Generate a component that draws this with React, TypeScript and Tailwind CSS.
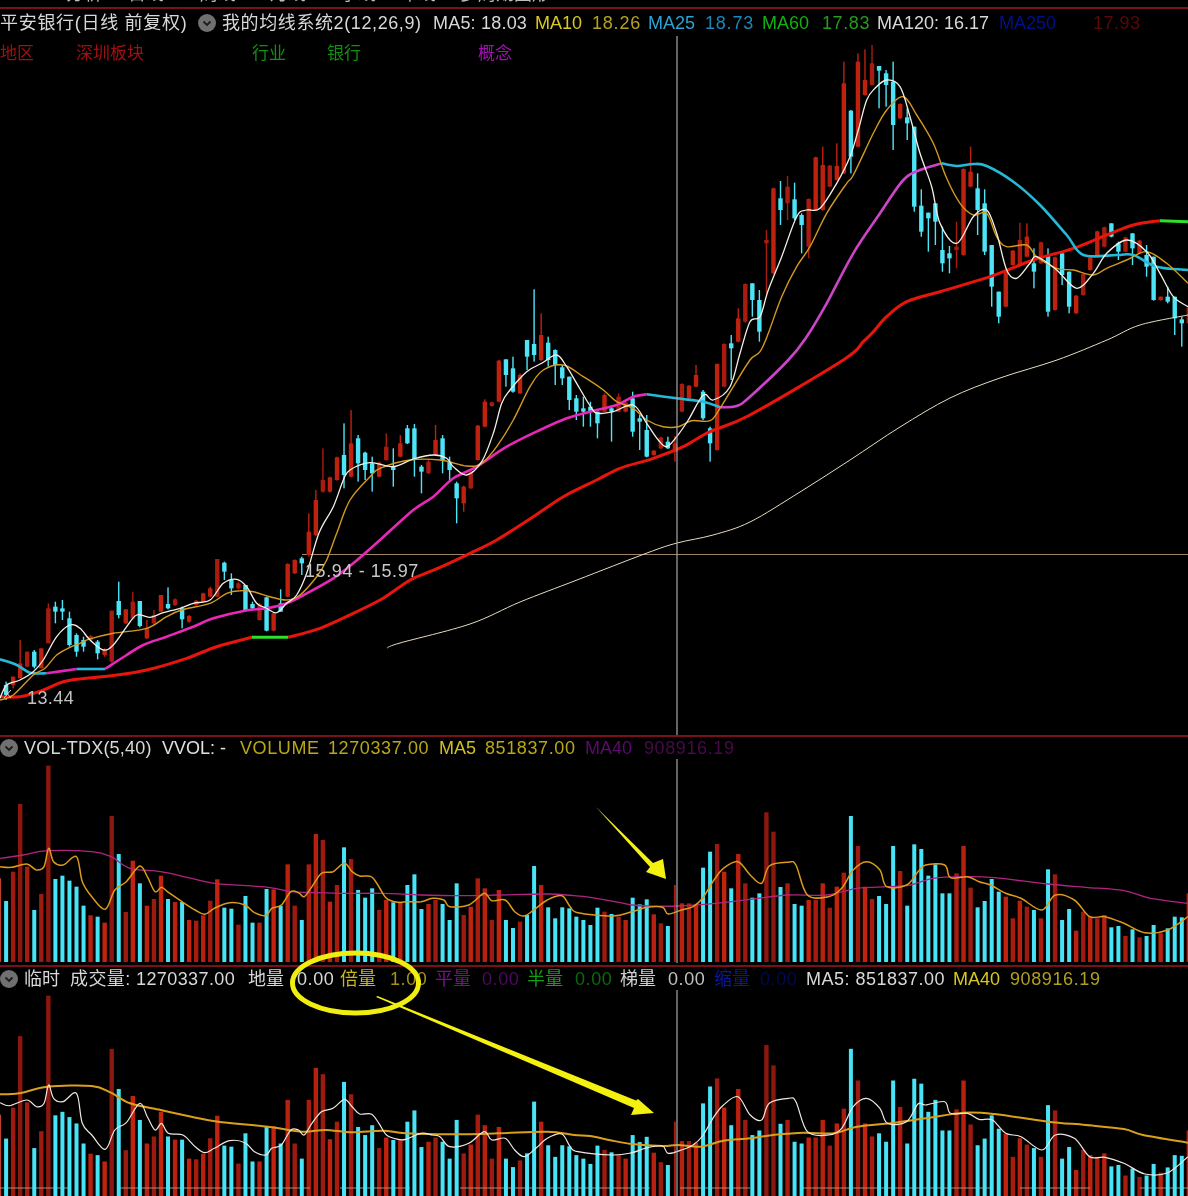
import React from "react";

type P = [number, number];
const fy = (o: number, s = 3) => (y: number) => o + y / s;

const pairs = (a: number[], ox: number, sx: number, oy: number, sy = 3): P[] => {
  const r: P[] = [];
  for (let i = 0; i < a.length; i += 2) r.push([ox + a[i] / sx, oy + a[i + 1] / sy]);
  return r;
};

const smooth = (p: P[]) => {
  let d = `M${p[0][0].toFixed(1)} ${p[0][1].toFixed(1)}`;
  for (let i = 0; i < p.length - 1; i++) {
    const a = p[Math.max(i - 1, 0)], b = p[i], c = p[i + 1], e = p[Math.min(i + 2, p.length - 1)];
    const c1: P = [b[0] + (c[0] - a[0]) / 6, b[1] + (c[1] - a[1]) / 6];
    const c2: P = [c[0] - (e[0] - b[0]) / 6, c[1] - (e[1] - b[1]) / 6];
    d += `C${c1[0].toFixed(1)} ${c1[1].toFixed(1)} ${c2[0].toFixed(1)} ${c2[1].toFixed(1)} ${c[0].toFixed(1)} ${c[1].toFixed(1)}`;
  }
  return d;
};

const bx = (i: number) => 6.1 + 7.04 * i;

const tops = [513, 425, 222, 410, 540, 492, 107, 447, 437, 452, 470, 527, 556, 560, 578, 258, 372, 546, 392, 460, 527, 507, 437, 507, 516, 516, 570, 572, 556, 512, 448, 533, 536, 584, 498, 578, 578, 477, 478, 527, 403, 527, 570, 403, 312, 330, 515, 465, 352, 387, 480, 503, 475, 540, 510, 517, 515, 465, 433, 537, 522, 510, 522, 570, 460, 555, 530, 445, 475, 570, 480, 570, 594, 575, 555, 408, 465, 532, 565, 532, 535, 560, 570, 585];
const vol: { c: string; y: number }[] = [];
const seq2: [string, number][] = [["c", 533], ["r", 545], ["c", 552], ["r", 560], ["r", 570], ["c", 503], ["c", 523], ["c", 508], ["r", 553], ["r", 580], ["c", 588], ["t", 465], ["r", 520], ["r", 520], ["r", 525], ["c", 413], ["c", 365], ["r", 342], ["r", 425], ["c", 475], ["r", 372], ["r", 460], ["c", 503], ["c", 490], ["d", 247], ["d", 305], ["c", 471], ["r", 460], ["c", 522], ["c", 527], ["r", 510], ["r", 510], ["r", 460], ["r", 533], ["r", 470], ["r", 428], ["c", 258], ["r", 348], ["r", 470], ["r", 507], ["c", 498], ["c", 522], ["c", 348], ["r", 423], ["c", 527], ["c", 343], ["c", 357], ["c", 437], ["c", 403], ["c", 490], ["c", 490], ["r", 430], ["r", 348], ["r", 473], ["c", 532], ["c", 513], ["c", 447], ["c", 485], ["r", 500], ["r", 565], ["r", 512], ["r", 530], ["c", 540], ["r", 565], ["c", 418], ["r", 433], ["c", 570], ["c", 537], ["r", 602], ["r", 545], ["r", 560], ["r", 565], ["r", 555], ["c", 592], ["c", 588], ["r", 618], ["c", 598], ["r", 622], ["c", 618], ["c", 585], ["r", 610], ["c", 595], ["c", 560], ["c", 562], ["r", 490]];

const cyanFirst = [0, 4, 7, 8, 9, 10, 11, 13, 16, 19, 23, 25, 31, 32, 34, 35, 37, 39, 42, 48, 50, 51, 52, 55, 57, 58, 59, 62, 63, 64, 71, 72, 74, 75, 77, 78, 79, 80, 81, 82, 83];
const colourAt = (i: number) => {
  if (i <= 83) return cyanFirst.includes(i) ? "c" : "r";
  return seq2[i - 84][0];
};

for (let i = 0; i < 84; i++) {
  let c = colourAt(i);
  if (i === 6 || i === 2 || i === 15) c = "d";
  vol.push({ c, y: 730 + tops[i] / 3 });
}
seq2.forEach(([c, y]) => vol.push({ c, y: 730 + y / 3 }));

const redShade = (i: number, c: string) => {
  if (c === "d") return "#8c170f";
  const s = ["#b8200f", "#a81c10", "#c2230f", "#9c1a0f"];
  return s[(i * 7) % 4];
};

const Bars = ({ map, base }: { map: (y: number) => number; base: number }) => (
  <>
    <rect x={-2} y={map(730 + 445 / 3)} width={3} height={base - map(730 + 445 / 3)} fill="#c04030" />
    {vol.map((b, i) =>
      b.c === "c" ? null : (
        <rect key={i} x={bx(i) - (b.c === "t" ? 1 : 2.2)} y={map(b.y)} width={b.c === "t" ? 2 : 4.4} height={base - map(b.y)} fill={redShade(i, b.c)} />
      ),
    )}
  </>
);
const CyanBars = ({ map, base }: { map: (y: number) => number; base: number }) => (
  <>
    {vol.map((b, i) =>
      b.c === "c" ? <rect key={i} x={bx(i) - 2} y={map(b.y)} width={4} height={base - map(b.y)} fill="#46e4f6" /> : null,
    )}
  </>
);

const A = [[425, 435, 465, 480], [410, 410, 435, 445], [300, 370, 415, 415], [335, 335, 380, 380], [330, 335, 380, 385], [325, 325, 385, 385], [190, 205, 310, 310], [185, 200, 215, 250], [180, 205, 215, 240], [215, 235, 315, 320], [280, 285, 335, 350], [290, 300, 320, 335], [285, 288, 300, 305], [300, 305, 340, 358], [325, 330, 345, 350], [212, 212, 365, 368], [125, 183, 225, 235], [208, 208, 250, 252], [155, 185, 235, 240], [183, 183, 258, 262], [240, 265, 295, 297], [210, 225, 250, 255], [165, 165, 215, 215], [142, 192, 205, 208], [175, 178, 195, 198], [200, 205, 238, 265], [225, 228, 245, 248], [180, 182, 195, 198], [158, 160, 185, 188], [140, 145, 170, 172], [57, 57, 170, 172], [65, 68, 95, 120], [100, 120, 145, 165], [125, 130, 145, 148], [135, 135, 212, 215], [185, 192, 205, 207], [190, 192, 240, 242], [170, 172, 272, 274], [218, 220, 272, 274], [148, 190, 215, 215], [70, 72, 170, 172], [58, 60, 100, 102], [50, 55, 70, 105]];
const B = [[700, 755, 825, 830], [630, 660, 765, 768], [505, 600, 635, 638], [590, 592, 635, 638], [530, 532, 600, 602], [430, 525, 585, 625], [390, 490, 590, 592], [465, 475, 550, 605], [515, 518, 570, 600], [530, 550, 580, 635], [545, 548, 590, 592], [460, 500, 540, 542], [505, 560, 570, 620], [465, 490, 530, 532], [435, 445, 490, 492], [432, 445, 540, 590], [555, 560, 575, 640], [540, 545, 580, 582], [435, 480, 525, 527], [465, 475, 540, 580], [530, 545, 570, 605], [605, 610, 655, 730], [617, 620, 670, 695], [570, 575, 625, 627], [435, 437, 540, 542], [358, 365, 440, 442], [365, 367, 378, 380], [240, 242, 365, 367], [238, 238, 285, 320], [230, 265, 335, 338], [280, 285, 340, 342], [180, 180, 230, 270], [28, 192, 225, 245], [100, 165, 240, 243], [170, 188, 240, 260], [208, 210, 255, 315], [255, 262, 295, 315], [290, 290, 360, 390], [345, 355, 395, 420], [350, 385, 395, 440], [365, 380, 395, 440], [395, 395, 430, 475], [340, 345, 395, 397], [375, 385, 395, 485], [340, 350, 395, 397], [365, 368, 395, 397], [335, 355, 455, 470], [405, 415, 425, 510], [405, 450, 530, 532], [510, 512, 525, 527], [470, 472, 505, 507], [470, 485, 505, 507], [468, 490, 515, 545], [310, 312, 395, 397], [315, 317, 355, 357], [255, 285, 320, 322], [330, 335, 415, 420], [440, 445, 490, 545], [250, 252, 510, 512], [190, 192, 320, 322], [165, 190, 205, 300], [85, 115, 185, 187]];
const C = [[730, 732, 845, 848], [730, 730, 780, 830], [750, 780, 875, 905], [570, 600, 610, 760], [443, 445, 700, 702], [423, 475, 510, 555], [408, 440, 490, 540], [428, 478, 535, 540], [520, 525, 555, 640], [475, 477, 620, 655], [350, 352, 510, 512], [320, 375, 510, 512], [375, 377, 440, 442], [310, 378, 420, 422], [65, 130, 400, 402], [210, 212, 350, 400], [40, 65, 320, 322], [28, 120, 165, 167], [15, 70, 135, 137], [78, 78, 92, 205], [90, 100, 135, 200], [65, 125, 255, 330], [190, 192, 235, 237], [205, 232, 250, 300], [260, 260, 500, 515], [448, 497, 575, 590], [518, 518, 535, 635], [490, 490, 545, 615], [560, 630, 670, 695], [618, 640, 655, 700], [545, 620, 630, 685], [385, 387, 645, 647], [320, 395, 440, 442], [400, 445, 510, 585], [448, 490, 635, 645], [615, 615, 740, 800], [755, 755, 830, 850], [690, 692, 800, 802], [630, 632, 675, 677], [548, 600, 675, 677], [550, 590, 650, 652], [625, 670, 695, 745], [605, 607, 670, 672], [625, 645, 815, 830], [650, 652, 810, 812], [640, 640, 705, 735], [695, 695, 800, 820], [765, 767, 820, 822], [700, 702, 765, 767], [650, 652, 690, 692], [572, 574, 650, 652], [560, 562, 620, 622], [550, 550, 590, 592], [605, 610, 635, 660], [590, 592, 635, 637], [580, 580, 625, 675], [600, 602, 640, 642], [615, 645, 680, 710], [650, 650, 780, 782], [770, 770, 780, 782], [740, 770, 785, 790], [770, 770, 835, 885], [830, 838, 850, 920], [800, 802, 850, 852]];

const candleSets: [number[][], number, number][] = [[A, 0, 540], [B, 43, 280], [C, 105, 40]];

const Candles = () => (
  <>
    {candleSets.flatMap(([set, start, oy]) =>
      set.map((q, k) => {
        const i = start + k;
        const f = fy(oy);
        const cyan = colourAt(i) === "c";
        const fill = cyan ? "#4de4f7" : i % 3 === 0 ? "#a81c10" : "#bf210f";
        return (
          <g key={i} fill={fill}>
            <rect x={bx(i) - 0.7} y={f(q[0])} width={1.4} height={f(q[3]) - f(q[0])} />
            <rect x={bx(i) - 2.2} y={f(q[1])} width={4.4} height={Math.max(f(q[2]) - f(q[1]), 2)} />
          </g>
        );
      }),
    )}
  </>
);

const ma5 = [
  ...pairs([0, 475, 20, 435, 60, 420, 100, 395, 130, 360, 170, 290, 210, 255, 240, 265, 270, 300, 310, 330, 340, 315, 380, 260, 410, 225, 450, 232, 490, 218, 540, 205, 580, 190, 630, 180, 670, 130, 710, 118, 740, 140, 770, 190, 800, 205, 830, 218, 860, 190, 890, 165, 920, 100], 0, 3, 540),
  ...pairs([57, 759, 100, 680, 130, 600, 150, 570, 210, 548, 280, 560, 340, 537, 400, 525, 440, 535, 460, 560, 500, 585, 545, 545, 580, 460, 605, 370, 630, 330, 680, 275, 725, 250, 770, 225, 800, 260, 830, 310, 875, 385, 895, 400, 940, 395, 1000, 375, 1040, 430, 1075, 480, 1100, 500, 1130, 470, 1165, 420, 1210, 345, 1240, 360, 1290, 320, 1320, 220], 300, 3, 280),
  ...pairs([30, 845, 60, 830, 85, 750, 125, 650, 170, 530, 200, 510, 240, 505, 290, 430, 330, 350, 355, 270, 380, 180, 405, 145, 440, 120, 480, 140, 510, 230, 540, 340, 575, 440, 600, 550, 650, 610, 700, 530, 740, 510, 770, 580, 800, 690, 830, 715, 870, 670, 890, 650, 950, 690, 1010, 745, 1060, 700, 1100, 640, 1160, 600, 1220, 635, 1260, 700, 1300, 770, 1344, 800], 740, 3, 40),
];
const ma10 = [
  ...pairs([0, 480, 40, 465, 100, 405, 135, 385, 170, 345, 210, 322, 240, 310, 265, 298, 340, 280, 440, 265, 500, 230, 545, 210, 630, 190, 680, 160, 720, 152, 760, 155, 810, 170, 860, 180, 900, 165, 950, 110, 980, 60], 0, 3, 540),
  ...pairs([110, 760, 150, 660, 210, 590, 240, 565, 330, 540, 420, 540, 500, 558, 545, 550, 590, 500, 640, 420, 690, 320, 730, 270, 790, 255, 850, 290, 910, 330, 950, 365, 1000, 385, 1040, 420, 1090, 440, 1135, 440, 1175, 422, 1230, 422, 1260, 385, 1300, 320], 300, 3, 280),
  ...pairs([30, 960, 60, 935, 85, 880, 125, 770, 170, 680, 210, 620, 260, 520, 320, 430, 340, 405, 400, 280, 440, 210, 490, 170, 530, 225, 580, 310, 620, 415, 660, 490, 700, 525, 740, 520, 770, 590, 800, 620, 860, 615, 890, 650, 950, 685, 1000, 690, 1060, 705, 1100, 685, 1160, 660, 1220, 635, 1280, 670, 1344, 730], 740, 3, 40),
];
const ma25: [string, P[]][] = [
  ["#27b8d8", pairs([0, 358, 50, 375, 90, 398, 140, 400], 0, 3, 540)],
  ["#e024b8", pairs([140, 400, 230, 387], 0, 3, 540)],
  ["#27b8d8", pairs([230, 387, 315, 387], 0, 3, 540)],
  ["#e828b8", [
    ...pairs([315, 387, 380, 345, 430, 315, 500, 290, 580, 260, 640, 235, 735, 212, 800, 205, 860, 190, 920, 160, 1000, 115, 1060, 70], 0, 3, 540),
    ...pairs([240, 780, 340, 690, 400, 650, 460, 595, 530, 560, 620, 500, 720, 450, 800, 415, 870, 395, 950, 375, 1000, 350, 1040, 343], 300, 3, 280),
  ]],
  ["#27b8d8", pairs([1040, 343, 1130, 355, 1210, 365, 1260, 382], 300, 3, 280)],
  ["#cc44c8", [
    ...pairs([1260, 382, 1310, 378, 1350, 350], 300, 3, 280),
    ...pairs([145, 960, 200, 890, 260, 790, 340, 640, 420, 520, 490, 420, 540, 390, 605, 370], 740, 3, 40),
  ]],
  ["#27b8d8", pairs([605, 370, 650, 378, 700, 372, 740, 378, 820, 425, 900, 495, 980, 585, 1030, 645, 1130, 645, 1180, 645, 1250, 680, 1344, 690], 740, 3, 40)],
];
const ma60: [string, P[]][] = [
  ["#e8150c", pairs([0, 470, 60, 470, 130, 450, 190, 425, 260, 415, 350, 405, 440, 390, 560, 355, 650, 320, 755, 292], 0, 3, 540)],
  ["#2ee02a", pairs([755, 292, 865, 292], 0, 3, 540)],
  ["#e8150c", [
    ...pairs([865, 292, 960, 265, 1060, 220, 1140, 180, 1200, 140], 0, 3, 540),
    ...pairs([340, 895, 420, 862, 510, 820, 590, 780, 700, 710, 790, 650, 890, 600, 960, 565, 1060, 535, 1150, 500, 1230, 455, 1350, 405], 300, 3, 280),
    ...pairs([310, 960, 370, 905, 400, 875, 440, 830, 500, 785, 600, 755, 750, 710, 880, 660, 1000, 625, 1100, 585, 1180, 555, 1260, 542], 740, 3, 40),
  ]],
  ["#2ee02a", pairs([1260, 542, 1344, 545], 740, 3, 40)],
];
const ma120: P[] = [[387, 648], [400, 643], [470, 624], [520, 602], [577, 580], [647, 553], [677, 543], [713, 535], [750, 522], [800, 492], [850, 460], [900, 427], [950, 398], [1000, 378], [1057, 360], [1107, 340], [1140, 325], [1188, 315]];

const orange = [
  ...pairs([0, 410, 30, 412, 70, 402, 95, 420, 115, 410, 127, 355, 140, 395, 165, 405, 200, 380, 215, 455, 240, 500, 275, 538, 300, 480, 330, 455, 365, 408, 385, 440, 405, 485, 422, 472, 440, 487, 478, 517, 510, 540, 535, 553, 560, 535, 600, 518, 640, 525, 665, 548, 695, 557, 710, 535, 735, 525, 760, 485, 780, 488, 795, 500, 815, 470, 840, 430, 870, 425, 900, 400, 920, 425, 940, 438, 970, 440, 990, 470, 1010, 505, 1040, 517, 1060, 515, 1100, 515, 1130, 505, 1160, 510, 1175, 530, 1225, 525, 1265, 490, 1285, 512, 1320, 510, 1345, 545, 1370, 558, 1400, 535, 1430, 510, 1468, 497, 1490, 530, 1510, 548], 0, 2.613, 730),
  ...pairs([60, 558, 110, 545, 150, 532, 190, 532, 205, 552, 240, 540, 270, 530, 295, 505, 325, 450, 350, 415, 388, 395, 420, 435, 450, 460, 470, 408, 520, 397, 540, 405, 570, 495, 625, 500, 660, 475, 690, 420, 725, 395, 760, 420, 778, 470, 830, 465, 860, 425, 880, 405, 930, 405, 945, 443, 990, 440, 1020, 455, 1050, 465, 1090, 490, 1130, 505, 1185, 540, 1220, 495, 1270, 510, 1310, 560, 1350, 560, 1400, 580, 1455, 608, 1515, 600, 1568, 560], 590, 2.622, 730),
];
const mag2 = [
  ...pairs([0, 385, 60, 375, 125, 362, 240, 365, 290, 380, 340, 415, 420, 425, 500, 445, 560, 460, 700, 472, 760, 485, 830, 488, 900, 490, 1000, 490, 1100, 495, 1200, 497, 1300, 495, 1430, 492, 1500, 497], 0, 2.613, 730),
  ...pairs([0, 502, 80, 518, 110, 525, 150, 528, 230, 528, 330, 520, 420, 508, 520, 495, 620, 495, 700, 475, 780, 470, 840, 465, 900, 445, 980, 440, 1060, 443, 1200, 462, 1300, 472, 1400, 482, 1470, 505, 1568, 520], 590, 2.622, 730),
];
const white3 = [
  ...pairs([0, 428, 25, 437, 70, 420, 95, 440, 115, 430, 127, 375, 140, 415, 165, 425, 200, 400, 215, 490, 240, 525, 275, 568, 300, 510, 330, 488, 365, 430, 385, 470, 405, 510, 422, 490, 440, 520, 478, 525, 510, 560, 535, 578, 560, 565, 600, 542, 640, 548, 665, 575, 695, 585, 710, 565, 735, 555, 760, 510, 780, 510, 795, 525, 815, 490, 840, 455, 870, 445, 900, 418, 920, 440, 940, 462, 970, 462, 990, 490, 1010, 525, 1040, 538, 1060, 538, 1100, 520, 1130, 525, 1150, 530, 1175, 560, 1225, 550, 1265, 515, 1285, 540, 1320, 535, 1345, 570, 1370, 590, 1400, 565, 1430, 535, 1468, 522, 1490, 560, 1510, 575], 0, 2.613, 960),
  ...pairs([60, 585, 110, 578, 150, 563, 190, 558, 205, 580, 240, 570, 270, 555, 295, 528, 325, 470, 350, 435, 388, 410, 420, 465, 450, 480, 470, 430, 520, 415, 540, 425, 570, 515, 625, 525, 660, 505, 690, 440, 725, 415, 760, 445, 780, 490, 830, 485, 860, 432, 880, 435, 930, 425, 945, 460, 990, 460, 1020, 478, 1055, 480, 1090, 520, 1130, 530, 1185, 570, 1220, 525, 1270, 535, 1310, 590, 1350, 592, 1400, 610, 1455, 642, 1515, 638, 1568, 590], 590, 2.622, 960),
];
const gold3 = [
  ...pairs([0, 403, 50, 400, 125, 380, 240, 378, 290, 398, 340, 430, 420, 450, 500, 470, 570, 485, 700, 500, 790, 515, 850, 510, 920, 517, 1000, 512, 1060, 520, 1180, 523, 1300, 520, 1430, 515, 1500, 525], 0, 2.613, 960),
  ...pairs([0, 528, 50, 540, 110, 552, 190, 558, 230, 555, 290, 560, 350, 542, 420, 535, 480, 525, 560, 518, 640, 520, 700, 500, 800, 488, 880, 475, 980, 458, 1060, 462, 1200, 485, 1300, 495, 1400, 507, 1450, 525, 1568, 548], 590, 2.622, 960),
];

const map2 = (y: number) => y;
const map3 = (y: number) => 995.7 + (y - 765.7) * 1.056;

const Badge = () => (
  <span className="flex h-[18px] w-[18px] shrink-0 items-center justify-center rounded-full bg-[#707070]">
    <svg width="12" height="12" viewBox="0 0 12 12" fill="none">
      <path d="M2.5 4.5 L6 8 L9.5 4.5" stroke="#1c1c1c" strokeWidth="1.8" />
    </svg>
  </span>
);

const s = "shrink-0 whitespace-nowrap";

export default function App() {
  return (
    <div className="h-[1196px] w-[1188px] overflow-hidden bg-black font-['Liberation_Sans','Noto_Sans_CJK_SC',sans-serif] text-[18px] leading-none text-[#d8d8d8]">
      <div className="relative flex h-[1196px] w-[1188px] flex-col blur-[0.7px]">
        <div className="h-[6px] shrink-0 overflow-hidden">
          <div className="-mt-[15px] flex text-[#bdbdbd]">
            <span className={`${s} w-[66px]`}> </span>
            <span className={`${s} w-[62px]`}>分析</span>
            <span className={`${s} w-[72px]`}>日线</span>
            <span className={`${s} w-[70px]`}>周线</span>
            <span className={`${s} w-[70px]`}>月线</span>
            <span className={`${s} w-[60px]`}>季线</span>
            <span className={`${s} w-[60px]`}>年线</span>
            <span className={`${s} w-[120px]`}>多周期图形</span>
          </div>
        </div>
        <div className="mt-[1px] h-[2px] shrink-0 bg-[#7a1018]" />

        <section className="relative h-[726px] shrink-0">
          <svg className="absolute inset-0 h-full w-full" viewBox="0 9 1188 726" preserveAspectRatio="none">
            <line x1="302" y1="554.5" x2="1188" y2="554.5" stroke="#a08468" strokeWidth="1" />
            <Candles />
            <path d={smooth(ma120)} fill="none" stroke="#e8dcc0" strokeWidth="1" />
            {ma60.map(([c, p], i) => <path key={i} d={smooth(p)} fill="none" stroke={c} strokeWidth="3" />)}
            {ma25.map(([c, p], i) => <path key={i} d={smooth(p)} fill="none" stroke={c} strokeWidth="2.6" />)}
            <path d={smooth(ma10)} fill="none" stroke="#d39a1e" strokeWidth="1.4" />
            <path d={smooth(ma5)} fill="none" stroke="#f6efe6" strokeWidth="1.3" />
          </svg>
          <div className="relative flex h-[28px] items-center">
            <span className={`${s} w-[198px] tracking-[0.7px]`}>平安银行(日线 前复权)</span>
            <span className="w-[24px] shrink-0"><Badge /></span>
            <span className={`${s} w-[211px] tracking-[0.6px]`}>我的均线系统2(12,26,9)</span>
            <span className={`${s} w-[102px] tracking-[0.2px]`}>MA5: 18.03</span>
            <span className={`${s} w-[57px] text-[#d8c820]`}>MA10</span>
            <span className={`${s} w-[56px] tracking-[0.8px] text-[#b8a020]`}>18.26</span>
            <span className={`${s} w-[57px] text-[#2aa4d4]`}>MA25</span>
            <span className={`${s} w-[57px] tracking-[0.8px] text-[#1c88b8]`}>18.73</span>
            <span className={`${s} w-[60px] text-[#12b012]`}>MA60</span>
            <span className={`${s} w-[55px] tracking-[0.6px] text-[#2a9a20]`}>17.83</span>
            <span className={`${s} w-[122px]`}>MA120: 16.17</span>
            <span className={`${s} w-[94px] text-[#00108a]`}>MA250</span>
            <span className={`${s} tracking-[0.5px] text-[#5a0808]`}>17.93</span>
          </div>
          <div className="relative flex h-[32px] items-center text-[17px]">
            <span className={`${s} w-[76px] text-[#a01010]`}>地区</span>
            <span className={`${s} w-[176px] text-[#a01010]`}>深圳板块</span>
            <span className={`${s} w-[75px] text-[#109010]`}>行业</span>
            <span className={`${s} w-[151px] text-[#109010]`}>银行</span>
            <span className={`${s} text-[#a010b0]`}>概念</span>
          </div>
          <span className="absolute left-[305px] top-[553px] tracking-[0.6px] text-[#c8c8c8]">15.94 - 15.97</span>
          <span className="absolute left-[27px] top-[680px] tracking-[0.4px] text-[#c0c0c0]">13.44</span>
        </section>

        <div className="h-[2px] shrink-0 bg-[#7a1018]" />

        <section className="relative h-[228px] shrink-0">
          <svg className="absolute inset-0 h-full w-full" viewBox="0 737 1188 228" preserveAspectRatio="none">
            <Bars map={map2} base={962} />
            <CyanBars map={map2} base={962} />
            <path d={smooth(mag2)} fill="none" stroke="#b02480" strokeWidth="1.3" />
            <path d={smooth(orange)} fill="none" stroke="#dc9a1c" strokeWidth="1.5" />
          </svg>
          <div className="relative flex h-[22px] items-center">
            <span className="w-[24px] shrink-0"><Badge /></span>
            <span className={`${s} w-[138px] tracking-[0.2px]`}>VOL-TDX(5,40)</span>
            <span className={`${s} w-[78px] text-[#e0e0e0]`}>VVOL: -</span>
            <span className={`${s} w-[88px] tracking-[0.6px] text-[#b8a818]`}>VOLUME</span>
            <span className={`${s} w-[111px] tracking-[0.6px] text-[#b8a818]`}>1270337.00</span>
            <span className={`${s} w-[46px] text-[#d0c020]`}>MA5</span>
            <span className={`${s} w-[100px] tracking-[0.6px] text-[#b8a818]`}>851837.00</span>
            <span className={`${s} w-[59px] text-[#5e0a70]`}>MA40</span>
            <span className={`${s} tracking-[0.6px] text-[#4a0a4a]`}>908916.19</span>
          </div>
        </section>

        <div className="h-[2px] shrink-0 bg-[#7a1018]" />

        <section className="relative min-h-0 flex-1">
          <svg className="absolute inset-0 h-full w-full" viewBox="0 967 1188 229" preserveAspectRatio="none">
            <Bars map={map3} base={1196} />
            <line x1="0" y1="1188" x2="1188" y2="1188" stroke="#a59080" strokeWidth="1.2" strokeDasharray="70 50 190 30" />
            <CyanBars map={map3} base={1196} />
            <path d={smooth(gold3)} fill="none" stroke="#d9a01c" strokeWidth="2" />
            <path d={smooth(white3)} fill="none" stroke="#f0e8e0" strokeWidth="1.2" />
          </svg>
          <div className="relative flex h-[23px] items-center">
            <span className="w-[24px] shrink-0"><Badge /></span>
            <span className={`${s} w-[46px]`}>临时</span>
            <span className={`${s} w-[178px] tracking-[0.4px]`}>成交量: 1270337.00</span>
            <span className={`${s} w-[49px]`}>地量</span>
            <span className={`${s} w-[43px] tracking-[0.6px]`}>0.00</span>
            <span className={`${s} w-[50px] text-[#c8b820]`}>倍量</span>
            <span className={`${s} w-[45px] tracking-[0.6px] text-[#a89018]`}>1.00</span>
            <span className={`${s} w-[47px] text-[#7a1090]`}>平量</span>
            <span className={`${s} w-[45px] tracking-[0.6px] text-[#4e0a60]`}>0.00</span>
            <span className={`${s} w-[48px] text-[#10a010]`}>半量</span>
            <span className={`${s} w-[45px] tracking-[0.6px] text-[#0c6a0c]`}>0.00</span>
            <span className={`${s} w-[48px] text-[#d0d0d0]`}>梯量</span>
            <span className={`${s} w-[46px] tracking-[0.6px] text-[#c0c0c0]`}>0.00</span>
            <span className={`${s} w-[46px] text-[#0a18a0]`}>缩量</span>
            <span className={`${s} w-[46px] tracking-[0.6px] text-[#000a50]`}>0.00</span>
            <span className={`${s} w-[147px] tracking-[0.5px]`}>MA5: 851837.00</span>
            <span className={`${s} w-[57px] text-[#d8c820]`}>MA40</span>
            <span className={`${s} tracking-[0.6px] text-[#b0a020]`}>908916.19</span>
          </div>
        </section>

        <svg className="pointer-events-none absolute inset-0 h-full w-full" viewBox="0 0 1188 1196">
          <line x1="677" y1="36" x2="677" y2="735" stroke="#a8a8a8" strokeWidth="1.2" />
          <line x1="677" y1="759" x2="677" y2="963" stroke="#a8a8a8" strokeWidth="1.2" />
          <line x1="677" y1="990" x2="677" y2="1196" stroke="#a8a8a8" strokeWidth="1.2" />
          <path d="M596 807 L653 863 L663 859 L666 879 L646 872 L650 867 Z" fill="#f4f010" />
          <path d="M376 997 L377.5 996 L636 1100.5 L638 1099 L654 1113 L631 1115 L634 1108 Z" fill="#f4f010" />
          <ellipse cx="355.5" cy="983" rx="63" ry="30" fill="none" stroke="#f0ee10" strokeWidth="5" />
          <path d="M4 690 L11 698 M11 690 L4 698" stroke="#d0d0d0" strokeWidth="1" />
        </svg>
      </div>
    </div>
  );
}
